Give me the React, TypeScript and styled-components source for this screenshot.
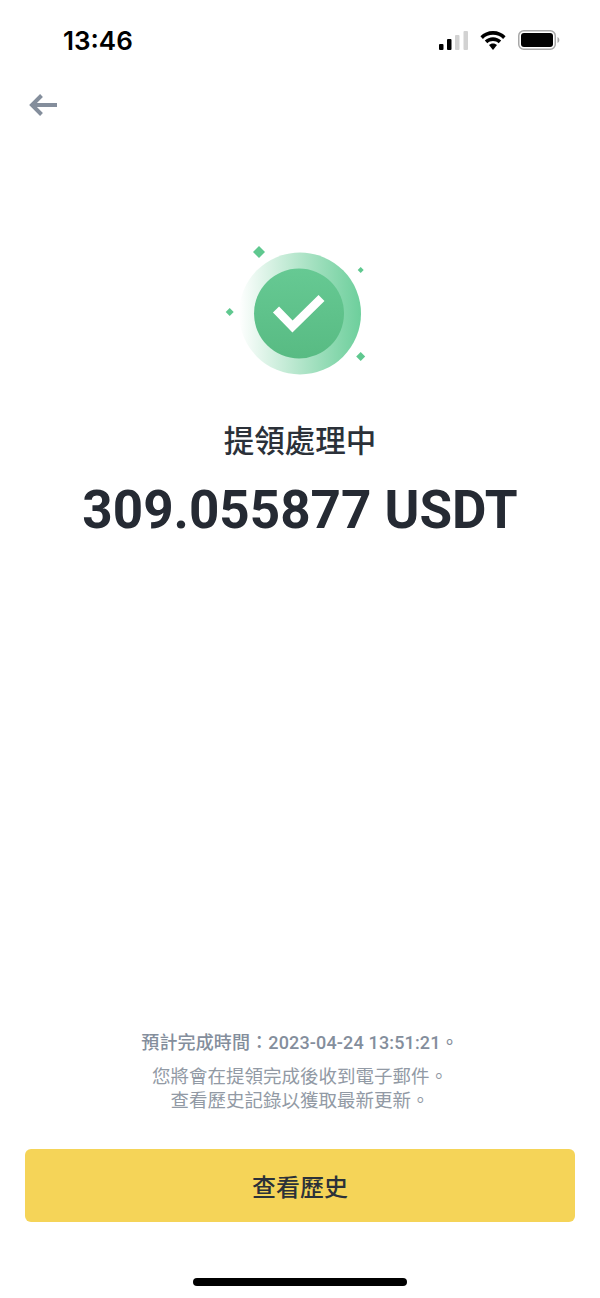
import * as React from 'react';
import styled, { createGlobalStyle } from 'styled-components';

const GlobalStyle = createGlobalStyle`
    html, body {
        margin: 0;
        padding: 0;
        background: #fff;
    }
`;

const cjk = `"Noto Sans CJK TC", "Noto Sans CJK SC", sans-serif`;

const App = () => (
    <Page>
        <GlobalStyle />
        <StatusBar>
            <Clock>13:46</Clock>
            <StatusIcons>
                <svg width="29" height="19" viewBox="0 0 29 19">
                    <rect x="0" y="13" width="4.5" height="6" rx="1" fill="#000" />
                    <rect x="8" y="8" width="4.5" height="11" rx="1" fill="#000" />
                    <rect x="16" y="4" width="4.5" height="15" rx="1" fill="#d2d2d2" />
                    <rect x="24.5" y="0" width="4.5" height="19" rx="1" fill="#d2d2d2" />
                </svg>
                <svg width="26" height="19" viewBox="0 0 26 19">
                    <path d="M13 0C8 0 3.6 2 .4 5.2l2.5 2.7C5.5 5.3 9 3.8 13 3.8s7.500 1.500 10.100 4.100l2.500-2.700C22.400 2 18 0 13 0z" fill="#000" />
                    <path d="M13 6.300c-3.200 0-6.100 1.300-8.200 3.300l2.500 2.700c1.500-1.400 3.500-2.300 5.700-2.300s4.200.9 5.700 2.300l2.500-2.700c-2.100-2-5-3.300-8.200-3.300z" fill="#000" />
                    <path d="M13 12.500c-1.600 0-3 .6-4 1.600L13 19l4-4.900c-1-1-2.400-1.600-4-1.600z" fill="#000" />
                </svg>
                <svg width="42" height="20" viewBox="0 0 42 20">
                    <rect x=".75" y=".75" width="36.500" height="18.500" rx="5" fill="none" stroke="#a8a8a8" strokeWidth="1.500" />
                    <rect x="3" y="3" width="32" height="14" rx="3" fill="#000" />
                    <path d="M39.500 7v6c1-.3 1.800-1.500 1.800-3s-.8-2.700-1.800-3z" fill="#a8a8a8" />
                </svg>
            </StatusIcons>
        </StatusBar>
        <NavBar>
            <svg width="28" height="24" viewBox="0 0 28 24">
                <path d="M12.500 2.500 3 12l9.500 9.500M3.500 12H28" fill="none" stroke="#848e9c" strokeWidth="4" />
            </svg>
        </NavBar>
        <Result>
            <svg width="150" height="140" viewBox="0 0 150 140">
                <defs>
                    <linearGradient id="ring" x1="0" y1="0" x2="1" y2="0">
                        <stop offset="0" stopColor="#5fc88f" stopOpacity="0" />
                        <stop offset="1" stopColor="#6dcf9c" />
                    </linearGradient>
                    <linearGradient id="disc" x1="0" y1="0" x2="0" y2="1">
                        <stop offset="0" stopColor="#66c993" />
                        <stop offset="1" stopColor="#58bb83" />
                    </linearGradient>
                </defs>
                <circle cx="81" cy="73.500" r="61" fill="url(#ring)" />
                <circle cx="80" cy="73.500" r="45" fill="url(#disc)" />
                <path d="M57 69.500 73.500 86.500 102.500 58" fill="none" stroke="#fff" strokeWidth="8.500" />
                <path d="M40 6l6 6-6 6-6-6z" fill="#5fc88f" />
                <path d="M141.700 27l3 3-3 3-3-3z" fill="#5fc88f" />
                <path d="M10.700 68l4 4-4 4-4-4z" fill="#5fc88f" />
                <path d="M141.700 112l4.500 4.500-4.500 4.500-4.500-4.500z" fill="#5fc88f" />
            </svg>
            <ResultTitle>提領處理中</ResultTitle>
            <Amount>309.055877 USDT</Amount>
        </Result>
        <Footer>
            <Eta>預計完成時間：2023-04-24 13:51:21。</Eta>
            <Note>您將會在提領完成後收到電子郵件。<br />查看歷史記錄以獲取最新更新。</Note>
            <HistoryButton>查看歷史</HistoryButton>
            <HomeBar />
        </Footer>
    </Page>
);

const Page = styled.div`
    display: flex;
    flex-direction: column;
    width: 600px;
    height: 1298px;
    overflow: hidden;
    background: #fff;
    color: #1e2329;
`;

const StatusBar = styled.div`
    display: flex;
    justify-content: space-between;
    align-items: center;
    height: 20px;
    padding: 30px 40px 0 63px;
`;

const Clock = styled.div`
    font-family: Inter, "Liberation Sans", sans-serif;
    font-size: 26px;
    font-weight: 600;
    color: #000;
`;

const StatusIcons = styled.div`
    display: flex;
    align-items: center;
    gap: 12px;
`;

const NavBar = styled.div`
    display: flex;
    height: 24px;
    padding: 43px 0 0 29px;
`;

const Result = styled.div`
    display: flex;
    flex-direction: column;
    align-items: center;
    padding-top: 123px;
    svg {
        margin-left: -12px;
    }
`;

const ResultTitle = styled.div`
    margin-top: 37px;
    font-family: ${cjk};
    font-size: 30.500px;
    font-weight: 500;
    line-height: 44px;
    color: #2b3139;
`;

const Amount = styled.div`
    margin-top: 18px;
    font-family: Roboto, "Liberation Sans", sans-serif;
    font-size: 53px;
    font-weight: 700;
    line-height: 62px;
    color: #252a33;
`;

const Footer = styled.div`
    display: flex;
    flex: 1;
    flex-direction: column;
    align-items: center;
    justify-content: flex-end;
`;

const Eta = styled.div`
    font-family: Roboto, ${cjk};
    font-size: 18px;
    font-weight: 500;
    letter-spacing: 0.150px;
    line-height: 26px;
    color: #848e9c;
`;

const Note = styled.div`
    margin-top: 7px;
    font-family: ${cjk};
    font-size: 18.500px;
    line-height: 24px;
    text-align: center;
    color: #929aa5;
`;

const HistoryButton = styled.div`
    display: flex;
    align-items: center;
    justify-content: center;
    width: 550px;
    height: 73px;
    margin-top: 38px;
    border-radius: 6px;
    background: #f5d458;
    font-family: ${cjk};
    font-size: 24px;
    font-weight: 500;
    color: #2b3139;
`;

const HomeBar = styled.div`
    width: 214px;
    height: 8px;
    margin: 56px 0 12px;
    border-radius: 4px;
    background: #000;
`;

export default App;
